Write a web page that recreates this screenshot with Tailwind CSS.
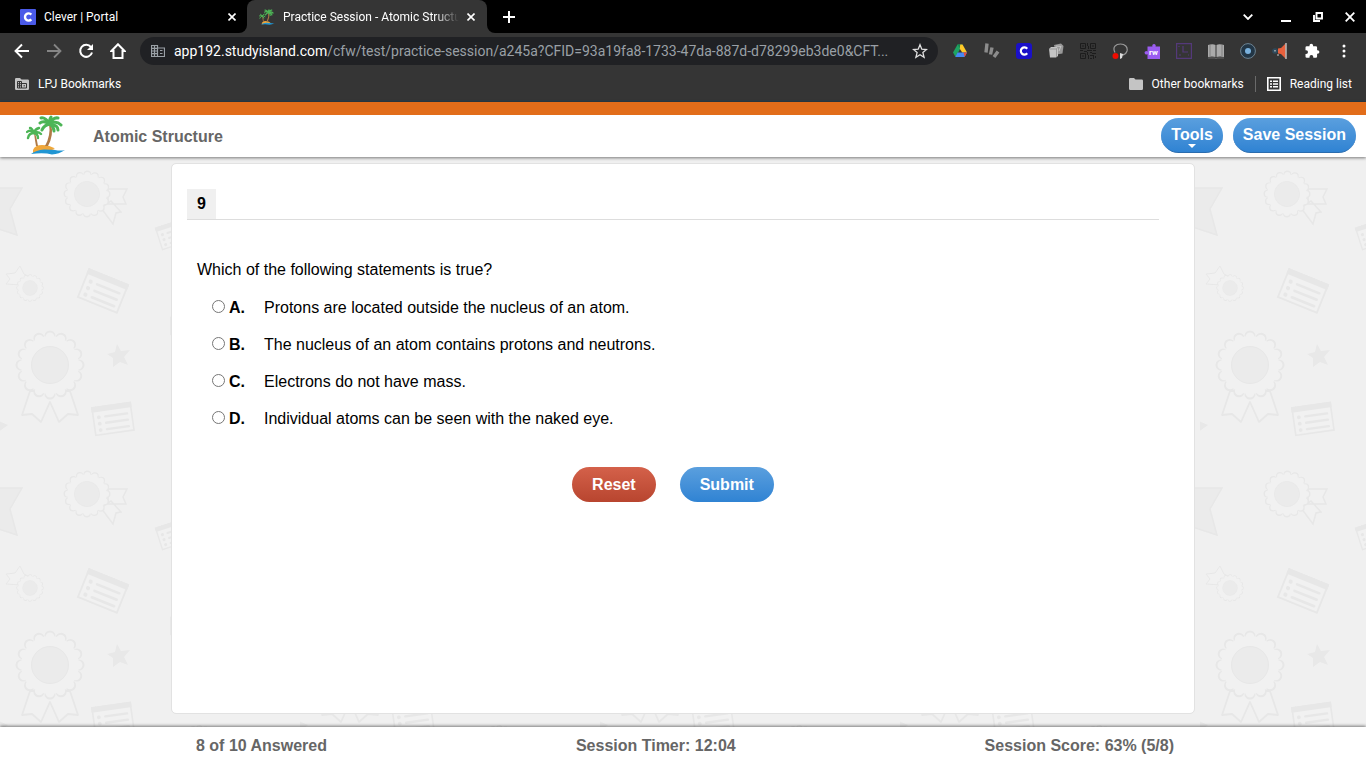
<!DOCTYPE html>
<html lang="en">
<head>
    <meta charset="UTF-8">
    <meta name="viewport" content="width=device-width, initial-scale=1.0">
    <title>Practice Session - Atomic Structure</title>
    <script src="https://cdn.jsdelivr.net/npm/@tailwindcss/browser@4"></script>
</head>
<body class="h-screen flex flex-col overflow-hidden bg-[#f0f0f0] text-black font-['Liberation_Sans',Arial,sans-serif]">

    <!-- Browser chrome -->
    <div class="shrink-0 bg-[#353535] text-white font-[Roboto,sans-serif] text-xs">

        <!-- Tabs -->
        <div class="flex h-[33px] bg-[#353535]">
            <div class="flex items-center w-[247px] pl-5 pr-[7px] bg-black rounded-br-lg">
                <svg class="size-4 shrink-0" viewBox="0 0 16 16"><rect width="16" height="16" rx="1" fill="#4a5ae8"/><path d="M11.3 5.6A3.6 3.6 0 1 0 11.3 10.4" fill="none" stroke="#fff" stroke-width="2.4"/></svg>
                <a href="#" class="ml-2 flex-1">Clever | Portal</a>
                <button aria-label="Close tab" class="size-4 flex items-center justify-center">
                    <svg class="size-2" viewBox="0 0 8 8"><path d="M.5.5l7 7M7.5.5l-7 7" stroke="#fff" stroke-width="1.6"/></svg>
                </button>
            </div>
            <div class="w-[240px] bg-black">
                <div class="flex items-center h-full pl-3 pr-2 bg-[#353535] rounded-t-lg">
                    <svg class="size-4 shrink-0" viewBox="0 0 40 40"><use href="#palm"/></svg>
                    <a href="#" class="ml-2 w-[176px] overflow-hidden whitespace-nowrap [mask-image:linear-gradient(to_right,black_86%,transparent)]">Practice Session - Atomic Structure</a>
                    <button aria-label="Close tab" class="ml-auto size-4 flex items-center justify-center">
                        <svg class="size-2" viewBox="0 0 8 8"><path d="M.5.5l7 7M7.5.5l-7 7" stroke="#fff" stroke-width="1.6"/></svg>
                    </button>
                </div>
            </div>
            <div class="flex flex-1 items-center bg-black rounded-bl-lg pl-4">
                <button aria-label="New tab"><svg class="size-3" viewBox="0 0 12 12"><path d="M6 0v12M0 6h12" stroke="#fff" stroke-width="2"/></svg></button>
                <button aria-label="Search tabs" class="ml-auto mr-[6px] w-8 flex justify-center"><svg class="w-[10px] h-[6px]" viewBox="0 0 10 6"><path d="M.7.7L5 5 9.3.7" fill="none" stroke="#fff" stroke-width="1.8"/></svg></button>
                <button aria-label="Minimize" class="w-8 flex justify-center"><svg class="size-[10px]" viewBox="0 0 10 10"><path d="M0 9h10" stroke="#fff" stroke-width="2"/></svg></button>
                <button aria-label="Restore" class="w-8 flex justify-center"><svg class="size-[10px]" viewBox="0 0 10 10"><path d="M3.500 1H9v5.500H3.500zM1 3v6h6" fill="none" stroke="#fff" stroke-width="1.9"/></svg></button>
                <button aria-label="Close" class="w-8 flex justify-center"><svg class="size-[10px]" viewBox="0 0 10 10"><path d="M.7.7l8.6 8.6M9.3.7L.7 9.3" stroke="#fff" stroke-width="1.8"/></svg></button>
            </div>
        </div>

        <!-- Toolbar -->
        <div class="flex items-center h-9 px-1.5">
            <button aria-label="Back" class="w-8 flex justify-center"><svg class="size-4" viewBox="0 0 16 16" fill="none" stroke="#fff" stroke-width="1.9"><path d="M15 8H2M8 1.5L1.5 8 8 14.5"/></svg></button>
            <button aria-label="Forward" class="w-8 flex justify-center"><svg class="size-4" viewBox="0 0 16 16" fill="none" stroke="#858585" stroke-width="1.8"><path d="M1 8h13M8 1.5L14.5 8 8 14.5"/></svg></button>
            <button aria-label="Reload" class="w-8 flex justify-center"><svg class="size-4" viewBox="0 0 16 16"><path d="M13 4.2A6 6 0 1 0 14 9.5" fill="none" stroke="#fff" stroke-width="2"/><path d="M15 1v6H9z" fill="#fff"/></svg></button>
            <button aria-label="Home" class="w-8 flex justify-center"><svg class="size-4" viewBox="0 0 16 16"><path d="M8 1.3L1.5 8h2v7h9V8h2z" fill="none" stroke="#fff" stroke-width="2"/></svg></button>
            <div class="flex flex-1 items-center h-7 mx-1.5 pl-[11px] pr-2.5 rounded-full bg-[#202124] min-w-0">
                <svg class="w-[14px] h-3 shrink-0" viewBox="0 0 14 12" fill="none" stroke="#9aa0a6"><path d="M.5.5h6v11h-6zM6.5 3h7v8.5h-7M.5 3.3h6M.5 6h6M.5 8.700h6M3.5.5v11M9 5.500h2.500M9 8.500h2.500" stroke-width="1.2"/></svg>
                <div role="textbox" aria-label="Address" contenteditable="true" class="ml-[9px] flex-1 overflow-hidden whitespace-nowrap text-sm text-[#9aa0a6]"><span class="text-white">app192.studyisland.com</span>/cfw/test/practice-session/a245a?CFID=93a19fa8-1733-47da-887d-d78299eb3de0&amp;CFT...</div>
                <button aria-label="Bookmark this page"><svg class="size-4" viewBox="0 0 16 16"><path d="M8 1.7l1.8 4.5 4.7.3-3.600 3.100 1.200 4.700L8 11.700l-4.100 2.600 1.200-4.700L1.500 6.500l4.700-.3z" fill="none" stroke="#e0e0e0" stroke-width="1.3"/></svg></button>
            </div>

            <!-- Extensions -->
            <button aria-label="Drive" class="w-8 flex justify-center"><svg class="size-4" viewBox="0 0 16 16"><path d="M5.500 1.500h2.700v4.200L3.600 14 1 9.600z" fill="#1ea362"/><path d="M5.500 1.500h5L8 5.700z" fill="#16884f"/><path d="M8.200 1.500h2.300L15 9.600h-4.800L7.800 5.700z" fill="#ffc928"/><path d="M5.600 9.600H15l-2.500 4.400H3.300z" fill="#4688f4"/><path d="M11.500 9.600H15l-2.400 4.300z" fill="#e94a3b"/></svg></button>
            <button aria-label="Stripes" class="w-8 flex justify-center"><svg class="size-4" viewBox="0 0 16 16" stroke="#8c8c8c" stroke-width="3.4"><path d="M3 .5L2 9.500M8 4.500L6.500 11.500M14 8.500l-4 5.500"/></svg></button>
            <button aria-label="Clever" class="w-8 flex justify-center"><svg class="size-4" viewBox="0 0 16 16"><rect width="16" height="16" rx="3" fill="#1a10c8"/><path d="M11.2 5.700A3.600 3.600 0 1 0 11.200 10.300" fill="none" stroke="#fff" stroke-width="2.2"/></svg></button>
            <button aria-label="Dice" class="w-8 flex justify-center"><svg class="size-4" viewBox="0 0 16 16"><path d="M6 2l7-1.500L15.500 3l-1 7.500-6 1z" fill="#999"/><path d="M1 6l2-2h7v9l-2 1.500H2z" fill="#c4c4c4"/><path d="M1 6h7.500l1.500-2M8.500 6v8" fill="none" stroke="#888" stroke-width=".7"/><path d="M8 3l5 .5M11 8l2-5" stroke="#c4c4c4"/></svg></button>
            <button aria-label="QR code" class="w-8 flex justify-center"><svg class="size-4" viewBox="0 0 16 16" fill="none" stroke="#1c1c1c"><path d="M.5.5h5v5h-5zM10.500.5h5v5h-5zM.5 10.500h5v5h-5zM2 3h2M12 3h2M2 13h2M7.500 0v3M8.500 3v3M7 7.500h5M0 7.500h3M4 8.500h3M13 7.500h3M7.500 9v3M8.500 12v4M10 9.500h2M12 10.500h4M10 12.500h3M13.500 12v4M10 15.500h2M15.500 13v2"/></svg></button>
            <button aria-label="Recorder" class="w-8 flex justify-center"><svg class="size-4" viewBox="0 0 16 16"><path d="M3 9.500C0 4 4 1 8.500 1S16 4 15 8c-.8 2.500-3 4-5.500 4" fill="none" stroke="#999" stroke-width="1.2"/><path d="M8 10l3 1-1 4-2 1z" fill="#ddd"/><circle cx="3.500" cy="13" r="3" fill="#f00c00"/></svg></button>
            <button aria-label="Read and write" class="w-8 flex justify-center"><svg class="size-4" viewBox="0 0 16 16"><path d="M3.500 3.500H8.500a1.700 1.700 0 1 1 3 0H16V16H3.500v-5a1.700 1.700 0 1 1 0-2.500z" fill="#9a5cf0"/><text x="5" y="12" font-size="8" font-weight="700" fill="#fff">rw</text></svg></button>
            <button aria-label="Clock" class="w-8 flex justify-center"><svg class="size-4" viewBox="0 0 16 16" fill="none" stroke="#54397a" stroke-width="1.2"><path d="M.6.6h14.800v14.800H.6zM7 3v6h5M3 3v1M3 12h2M12 12h1"/></svg></button>
            <button aria-label="Reader" class="w-8 flex justify-center"><svg class="size-4" viewBox="0 0 16 16"><path d="M0 2c3-1 6-1 7.500 0v12c-2-.8-5-.8-7.500 0zM16 2c-3-1-6-1-7.500 0v12c2-.8 5-.8 7.500 0z" fill="#aaa"/><path d="M2 2v11M14 2v11M0 15h7l1 .5 1-.5h7" fill="none" stroke="#777" stroke-width=".8"/></svg></button>
            <button aria-label="Target" class="w-8 flex justify-center"><svg class="size-4" viewBox="0 0 16 16"><circle cx="8" cy="8" r="7.4" fill="#223646" stroke="#6d8494"/><circle cx="8" cy="8" r="3" fill="#7ab2de"/></svg></button>
            <button aria-label="Announce" class="w-8 flex justify-center"><svg class="size-4" viewBox="0 0 16 16"><path d="M6 5.500l3-.5 4.500-4.500v15L9 11l-3-.5z" fill="#e8603c"/><path d="M14 0v16" stroke="#ddd" stroke-width="1.2"/><circle cx="3" cy="8" r="2.800" fill="#2e4a5c"/><path d="M3 7v1.500M5 12h2" stroke="#ccc" stroke-width="1.2"/></svg></button>
            <button aria-label="Extensions" class="w-8 flex justify-center"><svg class="size-4" viewBox="0 0 16 16"><path d="M1.500 4.500A1.300 1.300 0 0 1 2.800 3.200H5.500V2.500a1.800 1.800 0 1 1 3.600 0v.7h2.700a1.300 1.300 0 0 1 1.300 1.300v2.700h.5a1.800 1.800 0 1 1 0 3.600h-.5v2.700a1.300 1.300 0 0 1-1.300 1.300H9.300V14a1.900 1.900 0 1 0-3.800 0v.8H2.800a1.300 1.300 0 0 1-1.300-1.300V11h.6a1.900 1.900 0 1 0 0-3.800h-.6z" fill="#fff"/></svg></button>
            <button aria-label="Menu" class="w-8 flex justify-center"><svg class="size-4" viewBox="0 0 16 16" fill="#fff"><circle cx="8" cy="3" r="1.5"/><circle cx="8" cy="8" r="1.5"/><circle cx="8" cy="13" r="1.5"/></svg></button>
        </div>

        <!-- Bookmarks -->
        <div class="flex items-center h-[33px] pl-[15px] pr-[14px] pb-px border-b-2 border-[#2f3a42]">
            <a href="#" class="flex items-center gap-[9px]">
                <svg class="w-[14px] h-3" viewBox="0 0 14 12"><path d="M0 1.200Q0 0 1.200 0H5l1.500 1.500h6.300Q14 1.500 14 2.700v8.100Q14 12 12.800 12H1.200Q0 12 0 10.800z" fill="#c4c4c4"/><path d="M2.500 3.500h4v6.500h-4zM6.500 5.500h5V10h-5M2.500 5.700h4M2.500 7.800h4M4.500 3.500V10M8.500 7.800h1.500" fill="none" stroke="#353535"/></svg>
                LPJ Bookmarks
            </a>
            <a href="#" class="ml-auto flex items-center gap-[9px]">
                <svg class="w-[14px] h-3" viewBox="0 0 14 12"><path d="M0 1.200Q0 0 1.200 0H5l1.500 1.500h6.300Q14 1.500 14 2.700v8.100Q14 12 12.800 12H1.200Q0 12 0 10.800z" fill="#c4c4c4"/></svg>
                Other bookmarks
            </a>
            <div class="w-px h-4 bg-[#6a6a6a] mx-[11px]"></div>
            <a href="#" class="flex items-center gap-[9px]">
                <svg class="size-[14px]" viewBox="0 0 14 14" fill="none" stroke="#fff"><path d="M.8.8h12.400v12.400H.8z" stroke-width="1.6"/><path d="M3 4.300h2M6 4.300h5M3 7h2M6 7h5M3 9.700h2M6 9.700h5" stroke-width="1.5"/></svg>
                Reading list
            </a>
        </div>
    </div>

    <!-- App header -->
    <header class="relative z-10 shrink-0 flex items-center h-[55px] border-t-[13px] border-[#e26d1a] bg-white pl-[26px] pr-[10px] pb-0.5 shadow-[0_1px_3px_rgba(0,0,0,0.5)]">
        <svg class="size-10" viewBox="0 0 40 40">
            <g id="palm">
                <path d="M7 35q2-5 9-5 8 0 13 4l-9 3-13 1z" fill="#f0a73a"/>
                <path d="M23 9q2 11-4 22h3q6-11 3-22zM8 18q1 8 2 13h2Q11 24 9 18z" fill="#b07a45"/>
                <path d="M5 39q5-4 13-4.500 7 0 11 .5 6 1 10 0-6 4-13 4.500-8-2-21-.5z" fill="#2196d3"/>
                <g fill="none" stroke="#4db556" stroke-width="3" stroke-linecap="round" stroke-linejoin="round">
                    <path d="M24 9Q17 5 14 8M24 9q-5-7-9-6M24 9Q23 4 25 2M24 9q3-7 8-6M24 9q6-4 11 1M24 9q8 1 8 6M24 9q4 3 4 7M24 9q-6 1-8 6"/>
                </g>
                <g fill="none" stroke="#4db556" stroke-width="2.4" stroke-linecap="round">
                    <path d="M8 18q-4-4-7-1M8 18q-2-5-4-5M8 18q1-4 5-5M8 18q4-2 7 1M8 18q4 1 4 5M8 18q-5 0-6 5"/>
                </g>
            </g>
        </svg>
        <h1 class="ml-[27px] pt-1 font-bold text-[#666]">Atomic Structure</h1>
        <div class="ml-auto flex gap-[10px] font-bold text-white [text-shadow:0_1px_2px_rgba(0,0,0,0.4)]">
            <button class="relative h-[35px] px-[10px] rounded-full bg-linear-to-b from-[#5a9fde] to-[#2f83d3] border-b border-[#2a6cae]">Tools
                <svg class="absolute left-1/2 -translate-x-1/2 bottom-1 w-2 h-1" viewBox="0 0 8 4"><path d="M0 0h8L4 4z" fill="#fff"/></svg>
            </button>
            <button class="h-[35px] px-[10px] rounded-full bg-linear-to-b from-[#5a9fde] to-[#2f83d3] border-b border-[#2a6cae]">Save Session</button>
        </div>
    </header>

    <main class="relative flex-1 min-h-0 flex flex-col pt-[7px] pb-[14px]">
        <!-- Repeating awards background -->
        <svg class="absolute inset-0 w-full h-full" aria-hidden="true">
            <defs>
                <g id="rosette">
                    <circle r="29" fill="none" stroke="#e7e7e7" stroke-width="11" stroke-linecap="round" pathLength="16" stroke-dasharray="0 1"/>
                    <circle r="28" fill="none" stroke="#f1f1f1" stroke-width="9" stroke-linecap="round" pathLength="16" stroke-dasharray="0 1"/>
                    <circle r="29" fill="#f1f1f1"/>
                    <circle r="18.5" fill="#ebebeb" stroke="#e7e7e7"/>
                </g>
                <g id="medal">
                    <path d="M-20 26l-8 24 10-1 9 8 9-20 9 20 9-8 10 1-8-24z" fill="#f1f1f1" stroke="#e7e7e7" stroke-width="1.8" stroke-linejoin="round"/>
                    <use href="#rosette"/>
                </g>
                <g id="note">
                    <path d="M-21-15h42v30h-42z" fill="#f1f1f1" stroke="#e7e7e7" stroke-width="1.8"/>
                    <path d="M-22-16h44v6h-44z" fill="#e7e7e7"/>
                    <path d="M-8-4h24M-8 3h24M-8 10h24" stroke="#e7e7e7" stroke-width="2.5" stroke-linecap="round"/>
                    <path d="M-15-4h.1M-15 3h.1M-15 10h.1" stroke="#e7e7e7" stroke-width="4" stroke-linecap="round"/>
                </g>
                <path id="star" d="M-20 31h42l-12 21 7 26-37-12z" fill="#ebebeb" stroke="#e7e7e7" stroke-width="1.5"/>
                <pattern id="awards" width="300" height="300" patternUnits="userSpaceOnUse">
                    <use href="#star"/>
                    <use href="#star" x="300"/>
                    <path d="M108 32h19l-4 8 3 7h-18zM101 51l10-7 10 11-5 1-3 11z" fill="#f1f1f1" stroke="#e7e7e7" stroke-width="1.5"/>
                    <use href="#rosette" transform="translate(87 37) scale(.68)"/>
                    <path d="M20 128l-14-1 4-5-4-5 9-1 5-7 4 8 8 4z" fill="#f1f1f1" stroke="#e7e7e7"/>
                    <use href="#rosette" transform="translate(30 131) scale(.4)"/>
                    <use href="#note" transform="translate(103 134) rotate(22)"/>
                    <use href="#medal" transform="translate(50 208)"/>
                    <path d="M117 187l4 7 9-1-6 7 4 8-8-3-7 5 0-9-6-4 8-2z" fill="#e8e8e8"/>
                    <use href="#note" transform="translate(113 262) rotate(-8) scale(.92)"/>
                    <use href="#note" transform="translate(174 77) rotate(-18) scale(.75)"/>
                    <path d="M-6 262l14 6-14 10z" fill="#e8e8e8"/>
                    <path d="M170 160l10-6v26l-10-2z" fill="#e8e8e8"/>
                    <use href="#rosette" transform="translate(199 287) scale(.55)"/>
                </pattern>
            </defs>
            <rect width="100%" height="100%" fill="url(#awards)"/>
        </svg>

        <!-- Question panel -->
        <form class="relative flex-1 w-full max-w-[1022px] mx-auto pl-[15px] pr-[35px] pt-[25px] bg-white rounded outline outline-[#e2e2e2]">
            <div class="border-b border-[#ddd] flex">
                <h2 class="px-[10px] h-[30px] leading-[30px] bg-[#f0f0f0] font-bold">9</h2>
            </div>
            <fieldset class="pt-[38px] px-[10px]" aria-labelledby="question">
                <p id="question">Which of the following statements is true?</p>
                <div class="mt-[7px] pl-[15px]">
                    <div class="flex items-center h-[37px]">
                        <input type="radio" name="answer" id="a" class="size-[13px] mr-1 mb-0.5">
                        <label for="a" class="flex"><b class="w-[35px]">A.</b>Protons are located outside the nucleus of an atom.</label>
                    </div>
                    <div class="flex items-center h-[37px]">
                        <input type="radio" name="answer" id="b" class="size-[13px] mr-1 mb-0.5">
                        <label for="b" class="flex"><b class="w-[35px]">B.</b>The nucleus of an atom contains protons and neutrons.</label>
                    </div>
                    <div class="flex items-center h-[37px]">
                        <input type="radio" name="answer" id="c" class="size-[13px] mr-1 mb-0.5">
                        <label for="c" class="flex"><b class="w-[35px]">C.</b>Electrons do not have mass.</label>
                    </div>
                    <div class="flex items-center h-[37px]">
                        <input type="radio" name="answer" id="d" class="size-[13px] mr-1 mb-0.5">
                        <label for="d" class="flex"><b class="w-[35px]">D.</b>Individual atoms can be seen with the naked eye.</label>
                    </div>
                </div>
            </fieldset>
            <div class="mt-[30px] flex justify-center gap-6 font-bold text-white [text-shadow:0_1px_2px_rgba(0,0,0,0.4)]">
                <button type="reset" class="h-[35px] px-5 rounded-full bg-linear-to-b from-[#d4614a] to-[#b8452f]">Reset</button>
                <button type="button" class="h-[35px] px-5 rounded-full bg-linear-to-b from-[#5a9fde] to-[#2f83d3]">Submit</button>
            </div>
        </form>
    </main>

    <footer class="relative shrink-0 bg-white h-[41px] shadow-[0_-1px_3px_rgba(0,0,0,0.5)]">
        <div class="max-w-[1022px] mx-auto h-full pl-6 pr-5 pb-1 flex items-center justify-between font-bold text-[#666]">
            <span>8 of 10 Answered</span>
            <span>Session Timer: 12:04</span>
            <span>Session Score: 63% (5/8)</span>
        </div>
    </footer>
</body>
</html>
